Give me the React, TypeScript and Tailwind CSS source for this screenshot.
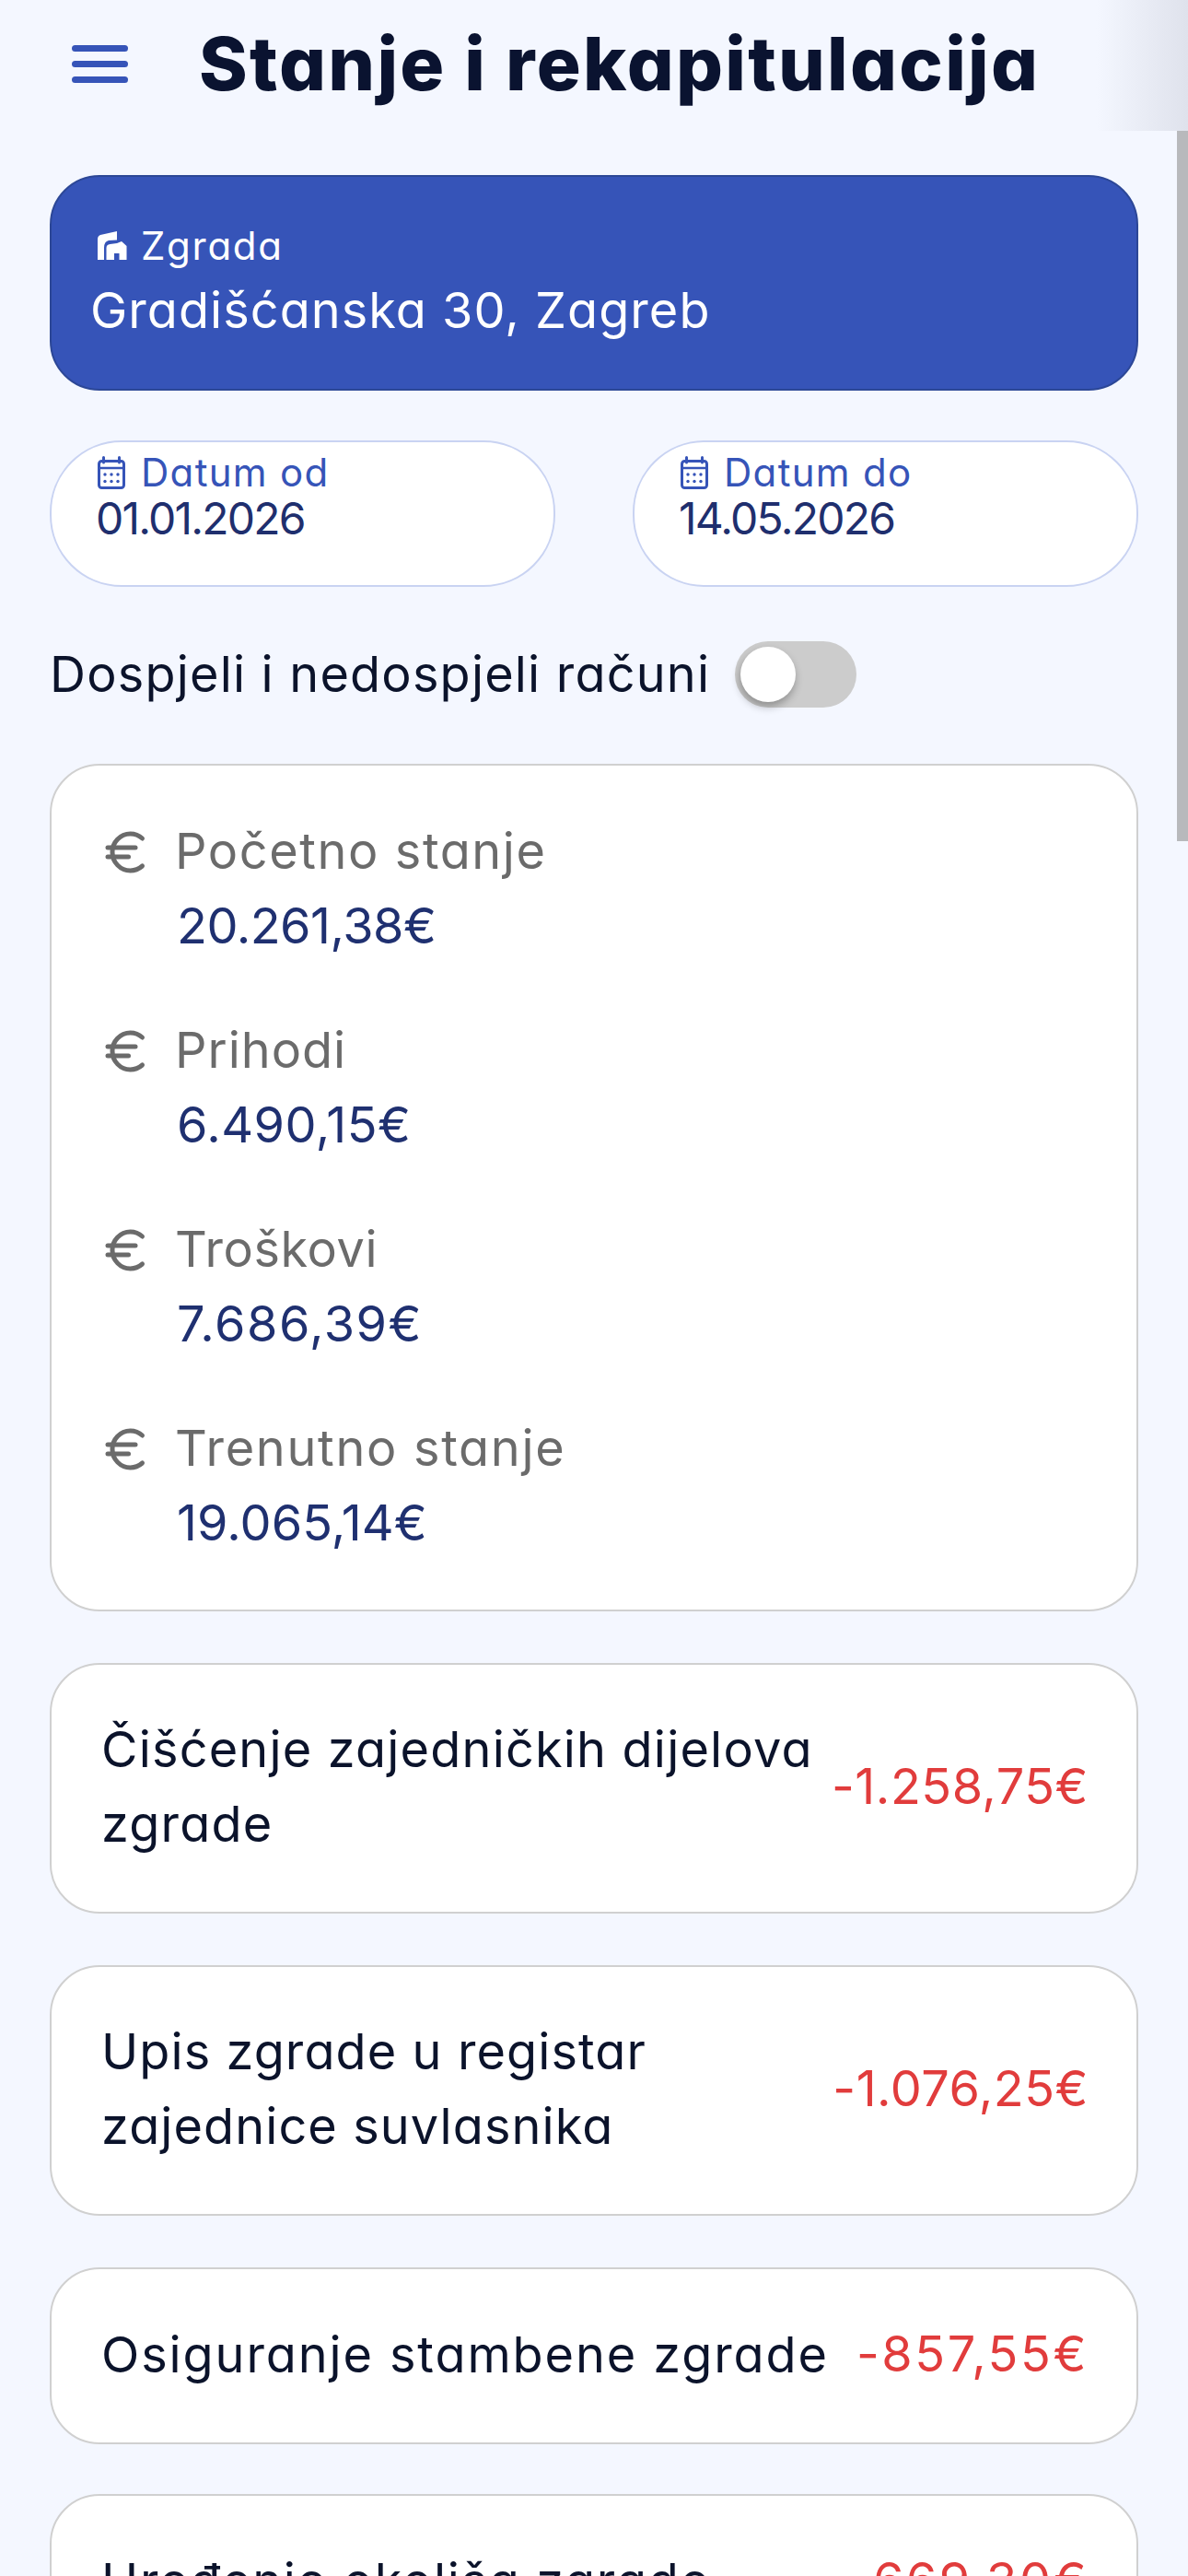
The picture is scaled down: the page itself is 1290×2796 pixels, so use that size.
import { Euro } from 'lucide-react';

const stanja = [
  { label: 'Početno stanje', value: '20.261,38€', labelTrack: 'tracking-[1.6px]', valueTrack: 'tracking-[-0.5px]' },
  { label: 'Prihodi', value: '6.490,15€', labelTrack: 'tracking-[1px]', valueTrack: 'tracking-[0.5px]' },
  { label: 'Troškovi', value: '7.686,39€', labelTrack: 'tracking-[0.6px]', valueTrack: 'tracking-[1.5px]' },
  { label: 'Trenutno stanje', value: '19.065,14€', labelTrack: 'tracking-[1.7px]', valueTrack: 'tracking-[0.1px]' },
];

const troskovi = [
  { naziv: 'Čišćenje zajedničkih dijelova zgrade', iznos: '-1.258,75€', track: 'tracking-[1.2px]', iznosTrack: 'tracking-[0.5px]' },
  { naziv: 'Upis zgrade u registar zajednice suvlasnika', iznos: '-1.076,25€', track: 'tracking-[1.1px]', iznosTrack: 'tracking-[0.5px]' },
  { naziv: 'Osiguranje stambene zgrade', iznos: '-857,55€', track: 'tracking-[1.9px]', iznosTrack: 'tracking-[2.6px]' },
  { naziv: 'Uređenje okoliša zgrade', iznos: '-669,30€', track: 'tracking-[1.7px]', iznosTrack: 'tracking-[2.5px]' },
];

function MenuIcon() {
  return (
    <svg width="61" height="41" viewBox="0 0 61 41" className="shrink-0">
      <rect x="0" y="0" width="61" height="7" rx="3.5" fill="#3654b8" />
      <rect x="0" y="17" width="61" height="7" rx="3.5" fill="#3654b8" />
      <rect x="0" y="34" width="61" height="7" rx="3.5" fill="#3654b8" />
    </svg>
  );
}

function BuildingIcon() {
  return (
    <svg width="34" height="34" viewBox="4 5 34 34" fill="#ffffff" className="shrink-0">
      <path d="M6 37V14.5Q6 11 9 10L27 6V15.5L18 16Q13 17 13 24V37Z" />
      <path d="M15.5 37V24Q15.5 20.5 19.5 20L27 19L32 17L37.5 22V37H29.5V30H24V37Z" />
    </svg>
  );
}

function CalendarIcon() {
  return (
    <svg width="34" height="36" viewBox="5 5 34 36" fill="none" className="shrink-0">
      <path d="M13.5 6.5V12M30.5 6.5V12" stroke="#3654b8" strokeWidth="3" strokeLinecap="round" />
      <rect x="8.5" y="10.5" width="27" height="29" rx="3" stroke="#3654b8" strokeWidth="3" />
      <path d="M8.5 18H35.5" stroke="#3654b8" strokeWidth="2.5" />
      {[15, 22, 29].map((x) => (
        <g key={x} fill="#3654b8">
          <circle cx={x} cy="25" r="1.7" />
          <circle cx={x} cy="32.5" r="1.7" />
        </g>
      ))}
    </svg>
  );
}

function DateCard({ label, value }: { label: string; value: string }) {
  return (
    <div className="h-[159px] rounded-[78px] border-2 border-[#c9d3f2] bg-white pl-[48px] pt-[8px]">
      <div className="flex h-[50px] items-center gap-[15px] text-[42px] leading-[50px] tracking-[1.3px] text-[#3654b8]">
        <CalendarIcon />
        <span>{label}</span>
      </div>
      <div className="text-[48px] leading-[50px] tracking-[-1.8px] text-[#1f2f6e]">{value}</div>
    </div>
  );
}

export default function App() {
  return (
    <div className="relative h-[2796px] w-[1290px] overflow-hidden bg-[#f4f7ff] font-[Inter,sans-serif] [font-feature-settings:'cv11']">
      {/* Header */}
      <div className="flex h-[142px] items-center gap-[77px] pb-[4px] pl-[78px]">
        <MenuIcon />
        <h1 className="text-[80px] font-extrabold leading-none tracking-[2.25px] text-[#0a1330]">Stanje i rekapitulacija</h1>
      </div>
      <div className="absolute right-0 top-0 h-[142px] w-[100px] bg-linear-to-r from-transparent to-[#dfe2ec]" />
      <div className="absolute right-0 top-[142px] h-[771px] w-[12px] bg-[#b8b9bc]" />

      <div className="px-[54px] pt-[48px]">
        {/* Zgrada */}
        <div className="h-[234px] rounded-[54px] border-2 border-[#2c4796] bg-[#3654b8] pl-[42px] pt-[43px] text-white">
          <div className="flex h-[63px] items-center gap-[15px] pl-[6px] text-[42px] leading-[63px] tracking-[1.7px]">
            <BuildingIcon />
            <span>Zgrada</span>
          </div>
          <div className="-mt-[2px] text-[54px] leading-[81px] tracking-[1.05px]">Gradišćanska 30, Zagreb</div>
        </div>

        {/* Datumi */}
        <div className="mt-[54px] grid grid-cols-2 gap-[84px]">
          <DateCard label="Datum od" value="01.01.2026" />
          <DateCard label="Datum do" value="14.05.2026" />
        </div>

        {/* Prekidac */}
        <div className="mt-[59px] flex h-[72px] items-center gap-[27px]">
          <span className="text-[54px] leading-[72px] tracking-[1.2px] text-[#0b132b]">Dospjeli i nedospjeli računi</span>
          <div className="flex h-[72px] w-[132px] items-center rounded-full bg-[#cccccc] pl-[6px]">
            <div className="h-[60px] w-[60px] rounded-full bg-white shadow-[-1px_5px_10px_rgba(0,0,0,0.3)]" />
          </div>
        </div>

        {/* Rekapitulacija */}
        <div className="mt-[61px] flex flex-col gap-[54px] rounded-[54px] border-2 border-[#d0d0d0] bg-white pb-[54px] pl-[51px] pt-[52px]">
          {stanja.map((s) => (
            <div key={s.label} className="flex gap-[23px]">
              <Euro size={60} strokeWidth={2} className="mt-[12px] shrink-0 text-[#6b6b6b]" />
              <div className="text-[54px] leading-[81px]">
                <div className={`${s.labelTrack} text-[#6b6b6b]`}>{s.label}</div>
                <div className={`${s.valueTrack} pl-[2px] text-[#1f3070]`}>{s.value}</div>
              </div>
            </div>
          ))}
        </div>

        {/* Troskovi */}
        <div className="mt-[56px] flex flex-col gap-[56px]">
          {troskovi.map((t, i) => (
            <div
              key={t.naziv}
              className={`flex min-h-[192px] items-center justify-between gap-[8px] rounded-[54px] border-2 border-[#d0d0d0] bg-white pl-[54px] pr-[52px] py-[53px] ${i === 3 ? '-mt-[2px]' : ''}`}
            >
              <span className={`${t.track} -translate-y-[2px] text-[54px] leading-[81px] text-[#0b132b]`}>{t.naziv}</span>
              <span className={`${t.iznosTrack} shrink-0 pb-[5px] text-[54px] leading-[76px] text-[#e13c3c]`}>{t.iznos}</span>
            </div>
          ))}
        </div>
      </div>
    </div>
  );
}
